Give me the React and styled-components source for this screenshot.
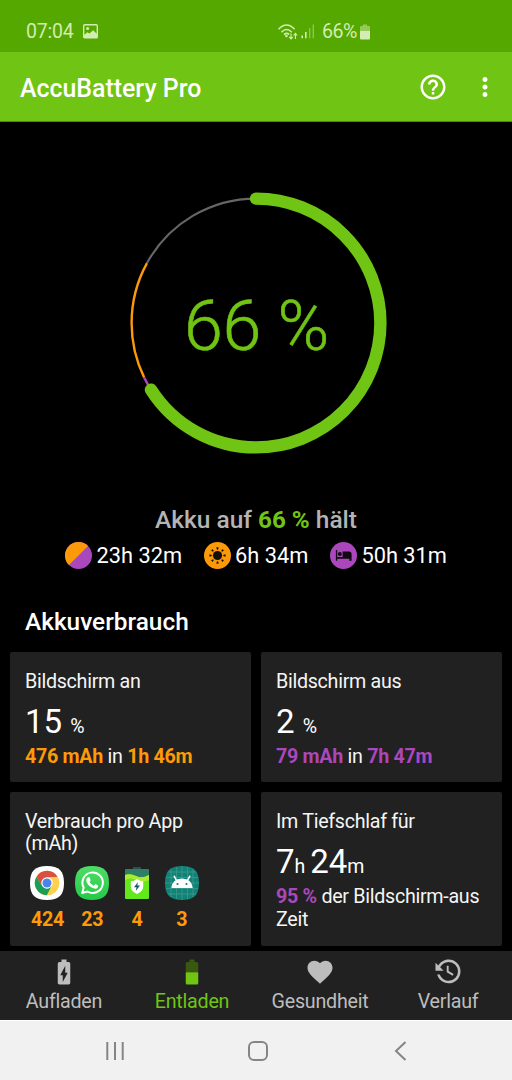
import React from "react";
import styled, { createGlobalStyle } from "styled-components";
import { MdHelpOutline, MdMoreVert, MdFavorite, MdBatteryChargingFull } from "react-icons/md";

const GREEN = "#70c413";
const ORANGE = "#fe9a09";
const PURPLE = "#ab47bc";

const GlobalStyle = createGlobalStyle`
  * { box-sizing: border-box; }
  body { margin: 0; background: #000; font-family: Roboto, "Liberation Sans", sans-serif; }
  svg { display: block; flex: none; }
`;

const Screen = styled.div`
  width: 512px;
  height: 1080px;
  display: flex;
  flex-direction: column;
  overflow: hidden;
  background: #000;
  color: #fff;
`;

const StatusBar = styled.div`
  height: 52px;
  flex: none;
  display: flex;
  align-items: center;
  padding: 11px 0 0 26px;
  background: #55a800;
  color: #d3ecb2;
  font-size: 19.5px;
  line-height: 24px;
`;

const Clock = styled.span`
  width: 57px;
  letter-spacing: -0.2px;
`;

const StatusIcons = styled.div`
  margin-left: 180px;
  display: flex;
  align-items: center;
`;

const Percent = styled.span`
  margin: 0 3px 0 7px;
  font-size: 19.6px;
  letter-spacing: -0.5px;
`;

const AppBar = styled.header`
  height: 70px;
  flex: none;
  display: flex;
  align-items: center;
  padding: 0 12.5px 0 20px;
  background: ${GREEN};
  border-bottom: 1px solid #4a8a0a;
`;

const Title = styled.h1`
  flex: 1;
  margin: 4px 0 0;
  font-size: 24.9px;
  font-weight: 500;
  line-height: 30px;
`;

const AppBarActions = styled.div`
  display: flex;
  align-items: center;
  gap: 22px;
`;

const Gauge = styled.section`
  height: 383px;
  flex: none;
  display: grid;
  place-items: center;
  padding-top: 18px;
  & > * { grid-area: 1 / 1; }
`;

const GaugeValue = styled.div`
  padding: 6px 0 0 1px;
  font-size: 70px;
  font-weight: 300;
  line-height: 80px;
  letter-spacing: -0.4px;
  color: ${GREEN};
  -webkit-text-stroke: 0.6px ${GREEN};
`;

const Estimate = styled.div`
  flex: none;
  padding-top: 1px;
  text-align: center;
  font-size: 24.5px;
  font-weight: 500;
  line-height: 28px;
  color: #b4b4b4;
  b { color: ${GREEN}; font-weight: 700; font-size: 24.2px; }
`;

const Durations = styled.div`
  flex: none;
  display: flex;
  justify-content: center;
  gap: 21.5px;
  margin-top: 7px;
`;

const Duration = styled.div`
  display: flex;
  align-items: center;
  gap: 4.5px;
  font-size: 21.8px;
  line-height: 28px;
  span { padding-top: 1px; line-height: 27px; }
`;

const SectionTitle = styled.h2`
  flex: none;
  margin: 39px 0 16px 25px;
  font-size: 24.4px;
  font-weight: 500;
  line-height: 28px;
`;

const Cards = styled.div`
  flex: 1;
  display: grid;
  grid-template-columns: 241px 241px;
  grid-template-rows: 130px 154px;
  gap: 10px;
  padding: 0 10px;
`;

const Card = styled.article`
  padding: 19px 15px 0;
  background: #212121;
  border-radius: 2px;
  font-size: 19.7px;
  letter-spacing: -0.3px;
  line-height: 22px;
  color: #f5f5f5;
`;

const Figure = styled.div`
  margin: 10px 0 4px;
  font-size: 33px;
  line-height: 38px;
  letter-spacing: 0;
  color: #fff;
  small { font-size: 19.5px; line-height: 0; white-space: pre; }
`;

const Detail = styled.div`
  line-height: 23px;
`;

const Accent = styled.b`
  font-weight: 700;
  color: ${(p) => p.$color};
`;

const Apps = styled.div`
  display: flex;
  margin-top: 11px;
`;

const AppItem = styled.div`
  width: 44.8px;
  display: flex;
  flex-direction: column;
  align-items: center;
  gap: 9px;
  font-weight: 700;
  color: ${ORANGE};
`;

const Tabs = styled.nav`
  height: 69px;
  flex: none;
  display: flex;
  background: #212121;
`;

const Tab = styled.div`
  flex: 1;
  display: flex;
  flex-direction: column;
  align-items: center;
  padding-top: 6px;
  gap: 3px;
  font-size: 19.7px;
  letter-spacing: -0.25px;
  line-height: 24px;
  color: ${(p) => (p.$active ? GREEN : "#bdbdbd")};
`;

const SystemNav = styled.div`
  height: 60px;
  flex: none;
  display: flex;
  align-items: center;
  padding-left: 103px;
  background: #f1f1f1;
  border-top: 1px solid #fff;
`;

const SystemButton = styled.div`
  width: ${(p) => p.$width}px;
`;

const PictureIcon = () => (
  <svg width="15" height="15" viewBox="0 0 15 15">
    <rect x="0.7" y="0.7" width="13.6" height="13.2" rx="1" fill="none" stroke="currentColor" strokeWidth="1.4" />
    <circle cx="4.6" cy="4.6" r="1.5" fill="currentColor" />
    <path d="M1 12V11L4.4 8.2L6.4 9.6L10.2 6.2L14 10V14H1Z" fill="currentColor" />
  </svg>
);

const WifiIcon = () => (
  <svg width="23" height="16" viewBox="0 0 23 16" fill="none" stroke="currentColor" strokeWidth="1.5">
    <path d="M.6 5.2Q8.5-3 16.6 5.2M3.4 8.2Q8.6 2.8 13.8 8.2M6 10.6Q8.6 8.2 11.2 10.4" />
    <circle cx="8.4" cy="12" r="1.3" fill="currentColor" stroke="none" />
    <path d="M13 9.5V15M11.2 12.8L13 15L14.8 12.8M17.4 15V9.3M15.6 11.5L17.4 9.3L19.2 11.5" strokeWidth="1.1" />
  </svg>
);

const SignalIcon = () => (
  <svg width="14" height="15" viewBox="0 0 14 15" fill="currentColor">
    <path d="M.4 11.5H2V14.3H.4ZM4 8H5.6V14.3H4Z" />
    <path d="M8 4H9.4V14.3H8ZM11.6.6H13V14.3H11.6Z" opacity=".45" />
  </svg>
);

const StatusBattery = () => (
  <svg width="10" height="16" viewBox="0 0 10 16" fill="currentColor">
    <path d="M3 .5H7V2H9Q10 2 10 3V7H0V3Q0 2 1 2H3Z" opacity=".5" />
    <path d="M0 7H10V14.5Q10 15.5 9 15.5H1Q0 15.5 0 14.5Z" />
  </svg>
);

const RADIUS = 124.4;

const Arc = ({ from, to, color, width, cap }) => (
  <circle
    cx="132" cy="132" r={RADIUS} fill="none" pathLength="100"
    stroke={color} strokeWidth={width} strokeLinecap={cap}
    strokeDasharray={`${to - from} 100`} strokeDashoffset={-from}
    transform="rotate(-90 132 132)"
  />
);

const GaugeRing = () => (
  <svg width="264" height="264" viewBox="0 0 264 264">
    <Arc from={83} to={100} color="#666" width="2.2" />
    <Arc from={67.8} to={83} color={ORANGE} width="2.4" />
    <Arc from={66} to={67.8} color={PURPLE} width="2.4" />
    <Arc from={0} to={66} color={GREEN} width="12.4" cap="round" />
  </svg>
);

const MixedIcon = () => (
  <svg width="27" height="27" viewBox="0 0 27 27">
    <circle cx="13.5" cy="13.5" r="13.5" fill={PURPLE} />
    <path d="M3.95 23.05A13.5 13.5 0 0 1 23.05 3.95Z" fill={ORANGE} />
  </svg>
);

const SunIcon = () => (
  <svg width="27" height="27" viewBox="0 0 27 27">
    <circle cx="13.5" cy="13.5" r="13.5" fill={ORANGE} />
    <circle cx="13.5" cy="13.5" r="4.6" fill="#15100a" />
    {[0, 45, 90, 135, 180, 225, 270, 315].map((a) => (
      <path key={a} d="M12.5 5.6H14.5L13.9 7.6H13.1Z" fill="#15100a" stroke="#15100a" strokeWidth=".3" transform={`rotate(${a} 13.5 13.5)`} />
    ))}
  </svg>
);

const BedIcon = () => (
  <svg width="27" height="27" viewBox="0 0 27 27">
    <circle cx="13.5" cy="13.5" r="13.5" fill={PURPLE} />
    <g fill="#120713">
      <path d="M5.9 8H7.2V15H20.6V18.8H19.3V16.8H7.2V18.8H5.9Z" />
      <circle cx="9.8" cy="12" r="2" />
      <path d="M12.6 9.6H18.8Q21.6 9.6 21.6 12.4V18.8H20.2V16H12.6Z" />
    </g>
  </svg>
);

const SQUIRCLE = "M17 0C29 0 34 5 34 17S29 34 17 34S0 29 0 17S5 0 17 0Z";

const ChromeIcon = () => (
  <svg width="34" height="34" viewBox="0 0 34 34">
    <path d={SQUIRCLE} fill="#fff" />
    <g transform="translate(17 17)">
      <circle r="12.2" fill="#fdd14e" />
      <path d="M-10.57-6.1A12.2 12.2 0 0 1 10.57-6.1L0-5.6L-4.85 2.8Z" fill="#d9503f" />
      <path d="M-10.57-6.1A12.2 12.2 0 0 0 0 12.2L4.85 2.8L-4.85 2.8Z" fill="#1c9c58" />
      <path d="M0-5.6L10.57-6.1A12.2 12.2 0 0 1 0 12.2L4.85 2.8Z" fill="#fdd14e" />
      <circle r="5.7" fill="#fff" />
      <circle r="4.5" fill="#4a83ee" />
    </g>
  </svg>
);

const WhatsAppIcon = () => (
  <svg width="34" height="34" viewBox="0 0 34 34">
    <defs>
      <linearGradient id="wa" x1="0" y1="0" x2="0" y2="1">
        <stop offset="0" stopColor="#4fdd67" />
        <stop offset="1" stopColor="#25c947" />
      </linearGradient>
    </defs>
    <path d={SQUIRCLE} fill="url(#wa)" />
    <path d="M7.2 27L8.7 21.6A10.2 10.2 0 1 1 12.5 25.5Z" fill="none" stroke="#fff" strokeWidth="2" strokeLinejoin="round" />
    <path d="M12.8 11.3Q14.3 10.7 14.8 12L15.6 14Q15.8 14.6 14.5 16Q16 18.7 18.8 19.7L20.3 18.1L23 19.4Q23.5 22.4 20.3 22.7Q16.7 22.7 13 18.6Q9.6 14 12.8 11.3Z" fill="#fff" />
  </svg>
);

const AccuIcon = () => (
  <svg width="34" height="34" viewBox="0 0 34 34">
    <path d="M13 1H21V4H13Z" fill="#27534f" />
    <path d="M6 3H28Q29 3 29 4V13H5V4Q5 3 6 3Z" fill="#307e66" />
    <path d="M5 9Q10 7 16 10T29 9V32Q29 33 28 33H6Q5 33 5 32Z" fill="#63e81c" />
    <path d="M5 9Q10 7 16 10T29 9V14Q22 17 16 14T5 14Z" fill="#a9ec32" />
    <path d="M17 13Q20 15.3 23.2 15.3V20.5Q23 25.5 17 28Q11 25.5 10.8 20.5V15.3Q14 15.3 17 13Z" fill="#fff" />
    <path d="M18 16L14 21.3H16.5L15.8 25L20 19.6H17.3Z" fill="#165e65" />
  </svg>
);

const AndroidIcon = () => (
  <svg width="34" height="34" viewBox="0 0 34 34">
    <path d={SQUIRCLE} fill="#128277" />
    <path d="M6 3V31M11.5 1V33M17 0V34M22.5 1V33M28 3V31M3 6H31M1 11.5H33M0 17H34M1 22.5H33M3 28H31" stroke="#4aa397" strokeWidth=".6" />
    <path d="M6.3 22Q7.2 12.8 17 12.5Q26.8 12.8 27.7 22Z" fill="#fff" />
    <path d="M11.5 14.5L9.2 10.2M22.5 14.5L24.8 10.2" stroke="#fff" strokeWidth="1.5" strokeLinecap="round" />
    <circle cx="12.5" cy="18" r="1.1" fill="#128277" />
    <circle cx="21.5" cy="18" r="1.1" fill="#128277" />
  </svg>
);

const DischargeIcon = () => (
  <svg width="30" height="30" viewBox="0 0 24 24">
    <path d="M7 12V5.3C7 4.6 7.6 4 8.3 4H10V2H14V4H15.7C16.4 4 17 4.6 17 5.3V12Z" fill="#38590f" />
    <path d="M7 12.2H17V20.7C17 21.4 16.4 22 15.7 22H8.3C7.6 22 7 21.4 7 20.7Z" fill={GREEN} />
  </svg>
);

const HistoryIcon = () => (
  <svg width="30" height="30" viewBox="0 0 24 24" fill="currentColor">
    <path d="M11,7V12.11L15.71,14.9L16.5,13.62L12.5,11.25V7M12.5,2C8.97,2 5.91,3.92 4.27,6.77L2,4.5V11H8.5L5.75,8.25C6.96,5.73 9.5,4 12.5,4A7.5,7.5 0 0,1 20,11.5A7.5,7.5 0 0,1 12.5,19C9.23,19 6.47,16.91 5.44,14H3.34C4.44,18.03 8.11,21 12.5,21C17.74,21 22,16.75 22,11.5A9.5,9.5 0 0,0 12.5,2Z" />
  </svg>
);

const RecentsIcon = () => (
  <svg width="24" height="20" viewBox="0 0 24 20" fill="none" stroke="#858585" strokeWidth="2">
    <path d="M4.3 1V19M12 1V19M19.7 1V19" />
  </svg>
);

const HomeIcon = () => (
  <svg width="22" height="22" viewBox="0 0 22 22" fill="none" stroke="#858585" strokeWidth="2">
    <rect x="2" y="2" width="18" height="18" rx="5" />
  </svg>
);

const BackIcon = () => (
  <svg width="14" height="20" viewBox="0 0 14 20" fill="none" stroke="#858585" strokeWidth="2">
    <path d="M11.5 1L2 10L11.5 19" />
  </svg>
);

const apps = [
  { icon: <ChromeIcon />, value: 424 },
  { icon: <WhatsAppIcon />, value: 23 },
  { icon: <AccuIcon />, value: 4 },
  { icon: <AndroidIcon />, value: 3 },
];

export default function App() {
  return (
    <Screen>
      <GlobalStyle />
      <StatusBar>
        <Clock>07:04</Clock>
        <PictureIcon />
        <StatusIcons>
          <WifiIcon />
          <SignalIcon />
          <Percent>66%</Percent>
          <StatusBattery />
        </StatusIcons>
      </StatusBar>
      <AppBar>
        <Title>AccuBattery Pro</Title>
        <AppBarActions>
          <MdHelpOutline size={30} />
          <MdMoreVert size={30} />
        </AppBarActions>
      </AppBar>

      <Gauge>
        <GaugeRing />
        <GaugeValue>66 %</GaugeValue>
      </Gauge>

      <Estimate>Akku auf <b>66 %</b> hält</Estimate>
      <Durations>
        <Duration><MixedIcon /><span>23h 32m</span></Duration>
        <Duration><SunIcon /><span>6h 34m</span></Duration>
        <Duration><BedIcon /><span>50h 31m</span></Duration>
      </Durations>

      <SectionTitle>Akkuverbrauch</SectionTitle>
      <Cards>
        <Card>
          <div>Bildschirm an</div>
          <Figure>15 <small>%</small></Figure>
          <Detail><Accent $color={ORANGE}>476 mAh</Accent> in <Accent $color={ORANGE}>1h 46m</Accent></Detail>
        </Card>
        <Card>
          <div>Bildschirm aus</div>
          <Figure>2 <small>%</small></Figure>
          <Detail><Accent $color={PURPLE}>79 mAh</Accent> in <Accent $color={PURPLE}>7h 47m</Accent></Detail>
        </Card>
        <Card>
          <div>Verbrauch pro App (mAh)</div>
          <Apps>
            {apps.map((a) => (
              <AppItem key={a.value}>{a.icon}{a.value}</AppItem>
            ))}
          </Apps>
        </Card>
        <Card>
          <div>Im Tiefschlaf für</div>
          <Figure>7<small>{"h "}</small>24<small>m</small></Figure>
          <Detail><Accent $color={PURPLE}>95 %</Accent> der Bildschirm-aus Zeit</Detail>
        </Card>
      </Cards>

      <Tabs>
        <Tab><MdBatteryChargingFull size={30} />Aufladen</Tab>
        <Tab $active><DischargeIcon />Entladen</Tab>
        <Tab><MdFavorite size={30} />Gesundheit</Tab>
        <Tab><HistoryIcon />Verlauf</Tab>
      </Tabs>
      <SystemNav>
        <SystemButton $width={144}><RecentsIcon /></SystemButton>
        <SystemButton $width={147}><HomeIcon /></SystemButton>
        <SystemButton $width={14}><BackIcon /></SystemButton>
      </SystemNav>
    </Screen>
  );
}
